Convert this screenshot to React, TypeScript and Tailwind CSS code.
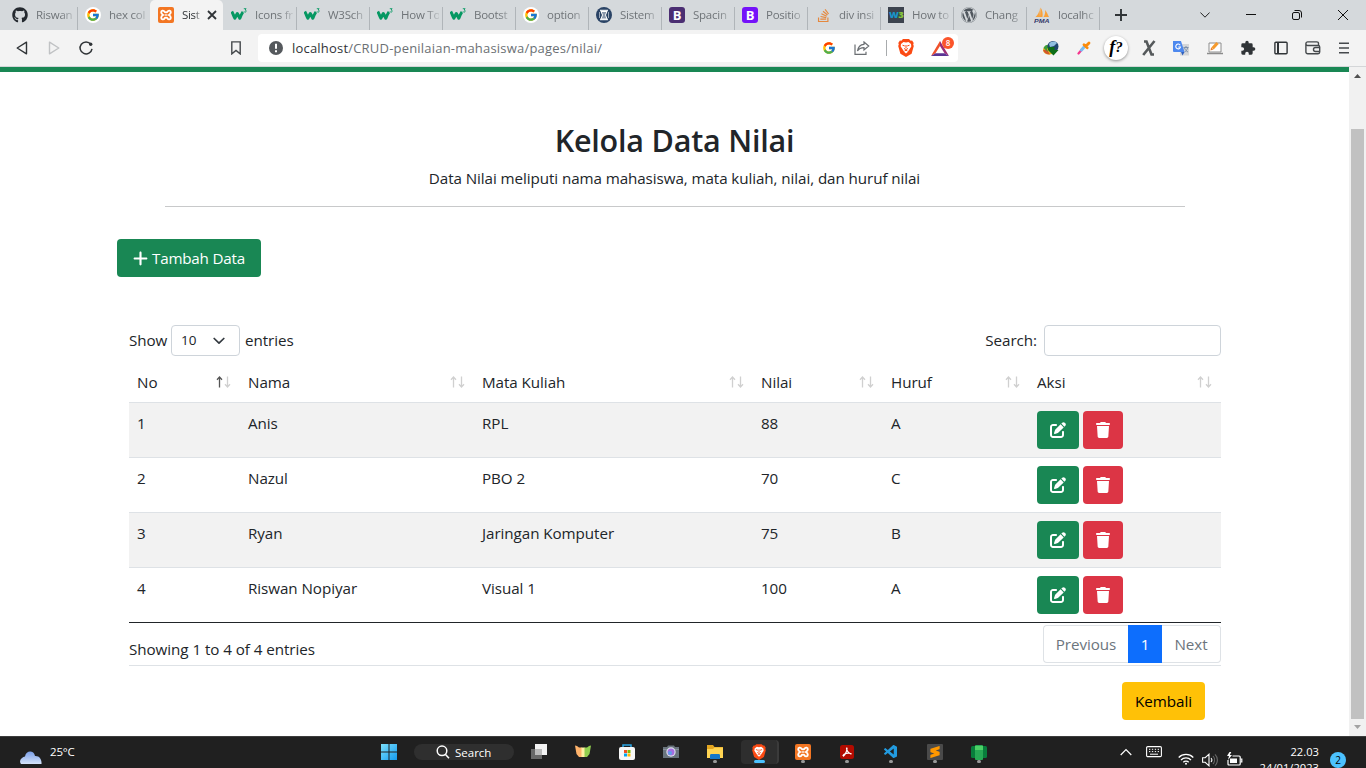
import React from "react";
import { FaGithub, FaWordpress, FaStackOverflow } from "react-icons/fa";
import { FaPenToSquare, FaTrash, FaPlus } from "react-icons/fa6";
import { FcGoogle } from "react-icons/fc";
import { SiSublimetext } from "react-icons/si";
import { VscVscode } from "react-icons/vsc";

const W3Icon = () => (
  <svg width="16" height="16" viewBox="0 0 16 16" fill="none">
    <path d="M0.8 4.5C1.500 5.500 2.500 8.500 3.800 11.200L6.300 6.500L8.800 11.200C10 8.500 11 6 12 5" stroke="#059862" strokeWidth="3" strokeLinejoin="round" />
    <path d="M12.800 1.700h2.300l-1 1.300c1.600.2 1.300 2.400-.2 2.100-.5 0-.9-.3-1-.6" stroke="#059862" strokeWidth="0.9" />
  </svg>
);

const GoogleTabIcon = () => (
  <span className="flex h-4 w-4 items-center justify-center rounded-full bg-white">
    <FcGoogle size={14} />
  </span>
);

const XamppIcon = () => (
  <span className="flex h-4 w-4 items-center justify-center rounded-[2px] bg-[#f37623]">
    <svg width="16" height="16" viewBox="0 0 16 16" fill="none" stroke="#fff" strokeWidth="1.900" strokeLinejoin="round">
      <path d="M5.200 8C3.600 7.200 3.200 6.500 3.200 5.300 3.200 3.300 5.700 3 6.500 4.700c.4.900 2.600.9 3 0 .8-1.700 3.300-1.400 3.300.6 0 1.200-.4 1.900-2 2.700 1.600.8 2 1.500 2 2.700 0 2-2.500 2.300-3.300.6-.4-.9-2.600-.9-3 0-.8 1.700-3.300 1.400-3.300-.6C3.200 9.500 3.600 8.800 5.200 8z" />
      <path d="M6.500 8h3" strokeWidth="1.300" />
    </svg>
  </span>
);

const SistemIcon = () => (
  <svg width="16" height="16" viewBox="0 0 16 16">
    <circle cx="8" cy="8" r="8" fill="#2a4365" />
    <path d="M4 3.500h8M4 12.500h8" stroke="#e5e9ee" strokeWidth="1.400" />
    <path d="M5 4.500h6L9.500 8l1.500 4H5l1.500-4z" fill="#8a98ab" stroke="#fff" strokeWidth="1" />
    <path d="M3.500 5v6M12.500 5v6" stroke="#b8c2ce" strokeWidth=".8" />
  </svg>
);

const BPurple = () => (
  <span className="flex h-4 w-4 items-center justify-center rounded-[3px] bg-[#4b2e72] text-[13px] leading-none font-bold text-white">B</span>
);
const BViolet = () => (
  <span className="flex h-4 w-4 items-center justify-center rounded-[3px] bg-[#7512f9] text-[13px] leading-none font-bold text-white">B</span>
);
const WThree = () => (
  <span className="flex h-4 w-4 items-center justify-center bg-[#3c434e] text-[9.500px] leading-none font-extrabold tracking-[-0.8px] text-[#1795c9]">
    W<span className="text-[#86c43c]">3</span>
  </span>
);
const PmaIcon = () => (
  <svg width="16" height="16" viewBox="0 0 16 16">
    <path d="M5.500 1.500C5.500 5 4 8 1.500 10H6zM6.500 0.500C8.500 3 9 7 8.500 10H6zM11 3c1.800 2 2.800 4.500 4 7H9.500C11 8 11.500 5 11 3z" fill="#f9a13a" />
    <text x="0" y="15.600" fontSize="6.200" fontWeight="800" fontStyle="italic" fill="#353a6b" fontFamily="Liberation Sans, sans-serif" textLength="15.500" lengthAdjust="spacingAndGlyphs">PMA</text>
  </svg>
);

const BraveLion = ({ w = 16, h = 18 }: { w?: number; h?: number }) => (
  <svg width={w} height={h} viewBox="0 0 16 18">
    <path d="M5 0h6l1.700 1.700 1.400-.2L15.700 4l-.500 1.500.600 1.500-2.200 7.700L8 18l-5.600-3.300L.2 7l.6-1.500L.3 4l1.600-2.500 1.400.2z" fill="#fb4a13" />
    <path d="M3 5l2.500-2L8 3.600 10.500 3 13 5l.300 2.500-2 3L9.700 13 8 14.500 6.300 13l-1.600-2.500-2-3z" fill="#fff" />
    <path d="M4.500 6.200l2.300.8M11.500 6.200l-2.300.8M8 6v3M6 9.500l2 1 2-1M6.500 12L8 11.200 9.500 12" stroke="#fb4a13" strokeWidth="1" fill="none" />
  </svg>
);

const tabs: { label: string; icon: React.ReactNode; active?: boolean }[] = [
  { label: "Riswan", icon: <FaGithub size={16} color="#24292f" /> },
  { label: "hex col", icon: <GoogleTabIcon /> },
  { label: "Sist", icon: <XamppIcon />, active: true },
  { label: "Icons fr", icon: <W3Icon /> },
  { label: "W3Sch", icon: <W3Icon /> },
  { label: "How To", icon: <W3Icon /> },
  { label: "Bootst", icon: <W3Icon /> },
  { label: "option", icon: <GoogleTabIcon /> },
  { label: "Sistem", icon: <SistemIcon /> },
  { label: "Spacin", icon: <BPurple /> },
  { label: "Positio", icon: <BViolet /> },
  { label: "div insi", icon: <FaStackOverflow size={15} color="#e5883e" /> },
  { label: "How to", icon: <WThree /> },
  { label: "Chang", icon: <FaWordpress size={16} color="#50575e" /> },
  { label: "localhc", icon: <PmaIcon /> },
];

function TabStrip() {
  return (
    <div className="flex h-[30px] bg-[#d5d9dc] pl-1">
      {tabs.map((t, i) => (
        <div
          key={i}
          className={
            t.active
              ? "flex h-[30px] w-[73px] shrink-0 items-center rounded-t-[5px] bg-[#f3f3f3] pl-[8px]"
              : "flex h-[30px] w-[73px] shrink-0 items-center pl-[8px]"
          }
        >
          <span className="flex w-4 shrink-0 justify-center">{t.icon}</span>
          <span
            className={
              t.active
                ? "ml-2 w-[19px] text-[11.500px] tracking-[-0.3px] whitespace-nowrap text-[#303437] [mask-image:linear-gradient(90deg,#000_65%,#0003)]"
                : "ml-2 w-[38px] text-[11.500px] tracking-[-0.25px] whitespace-nowrap text-[#6f7478] [mask-image:linear-gradient(90deg,#000_65%,#0003)]"
            }
          >
            {t.label}
          </span>
          {t.active ? (
            <svg className="ml-[6px]" width="10" height="10" viewBox="0 0 10 10">
              <path d="M1 1l8 8M9 1l-8 8" stroke="#303437" strokeWidth="1.800" />
            </svg>
          ) : (
            <span className={i === 1 ? "hidden" : "mt-[7px] -mr-px ml-auto h-[23px] w-px shrink-0 bg-[#b0b5b9]"} />
          )}
        </div>
      ))}
      <svg className="mt-[9px] ml-[16px]" width="12" height="12" viewBox="0 0 12 12">
        <path d="M6 0v12M0 6h12" stroke="#303437" strokeWidth="1.900" />
      </svg>
      <div className="mr-[18px] ml-auto flex items-center gap-[36px]">
        <svg width="10" height="6" viewBox="0 0 10 6" fill="none" stroke="#222"><path d="M.4.5L5 5.200 9.600.5" /></svg>
        <svg width="10" height="10" viewBox="0 0 10 10" stroke="#111"><path d="M0 4.500h10" /></svg>
        <svg width="10" height="10" viewBox="0 0 10 10" fill="none" stroke="#111">
          <rect x=".5" y="2.500" width="7" height="7" rx="1.500" />
          <path d="M2.500.5H7A2.500 2.500 0 0 1 9.500 3v4.500" />
        </svg>
        <svg width="10" height="10" viewBox="0 0 10 10" stroke="#111"><path d="M0 0l10 10M10 0L0 10" /></svg>
      </div>
    </div>
  );
}

function Toolbar() {
  return (
    <div className="flex h-[37px] items-center border-b border-[#d4d6d8] bg-[#f3f3f3]">
      <svg className="ml-[16px]" width="12" height="14" viewBox="0 0 12 14" fill="none" stroke="#303437" strokeWidth="1.400" strokeLinejoin="round">
        <path d="M10.500 1.200v11.600L1.200 7z" />
      </svg>
      <svg className="ml-[20px]" width="12" height="14" viewBox="0 0 12 14" fill="none" stroke="#c0c2c4" strokeWidth="1.400" strokeLinejoin="round">
        <path d="M1.500 1.200v11.600L10.800 7z" />
      </svg>
      <svg className="ml-[18px]" width="16" height="16" viewBox="0 0 16 16" fill="none" stroke="#303437" strokeWidth="1.500">
        <path d="M12.800 4.200A6 6 0 1 0 14 8.800" />
        <circle cx="12.700" cy="4.200" r="1.700" fill="#303437" stroke="none" />
      </svg>
      <svg className="ml-[137px]" width="10" height="14" viewBox="0 0 10 14" fill="none" stroke="#45494c" strokeWidth="1.400">
        <path d="M.8.9h8.400v12L5 9.500.8 12.900z" />
      </svg>
      <div className="ml-[17px] flex h-7 w-[700px] items-center rounded bg-white pl-[11px]">
        <svg width="14" height="14" viewBox="0 0 14 14">
          <circle cx="7" cy="7" r="7" fill="#55595d" />
          <path d="M7 2.800v5M7 9.200v2" stroke="#fff" strokeWidth="2" />
        </svg>
        <span className="ml-[9px] w-[530px] pt-px text-[13px] tracking-[0.2px] text-[#6b7074]">
          <span className="text-[#303437]">localhost</span>/CRUD-penilaian-mahasiswa/pages/nilai/
        </span>
        <FcGoogle size={14} />
        <svg className="ml-[18px]" width="16" height="14" viewBox="0 0 16 14" fill="none" stroke="#6a6e72" strokeWidth="1.200">
          <path d="M1 3.500v9.800h11v-2.500" />
          <path d="M10 1l4.700 4L10 9V6.700C7 6.700 5 7.500 3.500 10 4 6.500 6 3.600 10 3.300z" />
        </svg>
        <span className="ml-[16px] h-4 w-px bg-[#a8abad]" />
        <span className="ml-[11px]"><BraveLion /></span>
        <span className="relative ml-[17px]">
          <svg width="18" height="15" viewBox="0 0 18 15">
            <path d="M9 0L0 15l4.500-2.700L9 5z" fill="#f0512c" />
            <path d="M9 0l9 15-4.500-2.700L9 5z" fill="#9b2d76" />
            <path d="M0 15h18l-4.500-2.800h-9z" fill="#5b3494" />
          </svg>
          <span className="absolute -top-[4px] left-[11px] flex h-[12px] w-[12px] items-center justify-center rounded-full bg-[#fb542b] text-[8px] leading-none font-semibold text-white">8</span>
        </span>
      </div>
      <div className="mr-[17px] ml-auto flex w-[306px] items-center justify-between">
        <svg width="16" height="16" viewBox="0 0 16 16">
          <ellipse cx="6" cy="10" rx="6" ry="4.500" fill="#e5b51e" />
          <path d="M0 10c1 3 4 4.500 7 4.500l-3-5z" fill="#d4552c" />
          <path d="M.5 8c1-3 4-4 7-3L4 9l1 3z" fill="#3c9d35" />
          <circle cx="10" cy="6.500" r="5.500" fill="#20466f" />
          <path d="M6 4c2-3 6-3 8-1l-3 3-4 1z" fill="#8fbfe0" />
          <path d="M5.500 7h6v3h4L10.500 15.500 5 10z" fill="#0d6d17" />
        </svg>
        <svg width="14" height="14" viewBox="0 0 14 14" strokeLinecap="round">
          <path d="M1.500 12.500l3-3.500" stroke="#f5358d" strokeWidth="2.200" />
          <path d="M4.500 9l3.500-4" stroke="#79bdf2" strokeWidth="3" />
          <path d="M7 3.700l3.200 3M9.300 4.800L12 2" stroke="#fb8b0b" strokeWidth="2.800" />
        </svg>
        <span className="-mx-1 flex h-6 w-6 items-center justify-center rounded-full bg-white pb-0.5 font-['Liberation_Serif',serif] text-[18px] leading-none font-bold text-black italic shadow-[0_1px_3px_#0006]">
          f<span className="text-[15px]">?</span>
        </span>
        <svg width="14" height="16" viewBox="0 0 14 16" fill="none" stroke="#55595b">
          <path d="M2 1.500h2.500l5 13H12M12.500 1L1.200 15" strokeWidth="2.600" />
        </svg>
        <svg width="16" height="16" viewBox="0 0 16 16">
          <rect x="7" y="4" width="9" height="11.500" fill="#d5d6d8" />
          <path d="M0 1h8l3.500 11H1a1 1 0 0 1-1-1z" fill="#4d88ee" />
          <path d="M8 12h3.500L9.500 15.500z" fill="#2f60bd" />
          <path d="M7.200 5.200A2.400 2.400 0 1 0 7.500 7H5.300" fill="none" stroke="#fff" strokeWidth="1.100" />
          <path d="M10.500 7.500h5M13 6v1.500M14.700 7.500c-.5 2.500-2 4-3 4.500M11.500 8c.7 2 2 3.200 3.500 4" fill="none" stroke="#758ba8" strokeWidth=".9" />
        </svg>
        <svg width="16" height="16" viewBox="0 0 16 16">
          <path d="M2 3h12v9H2z" fill="#fff" stroke="#8c8c8c" />
          <path d="M0 13.500h16" stroke="#8b8b8b" strokeWidth="1.500" />
          <path d="M5.500 8.500L10.500 3" stroke="#f59a2d" strokeWidth="3.200" />
          <path d="M3.500 10.500l.5-3 2.300 2z" fill="#e57d28" />
        </svg>
        <svg width="16" height="16" viewBox="0 0 24 24" fill="#303437">
          <path d="M20.500 11H19V7a2 2 0 0 0-2-2h-4V3.500a2.500 2.500 0 0 0-5 0V5H4a2 2 0 0 0-2 2v3.800h1.500a2.700 2.700 0 0 1 0 5.400H2V20a2 2 0 0 0 2 2h3.800v-1.500a2.700 2.700 0 0 1 5.400 0V22H17a2 2 0 0 0 2-2v-4h1.500a2.500 2.500 0 0 0 0-5z" />
        </svg>
        <svg width="14" height="14" viewBox="0 0 14 14" fill="none" stroke="#303437" strokeWidth="1.400">
          <rect x=".9" y="1.200" width="12.200" height="11.600" rx="1" /><path d="M4 1v12" strokeWidth="2" />
        </svg>
        <svg width="16" height="14" viewBox="0 0 16 14" fill="none" stroke="#45494c" strokeWidth="1.400">
          <path d="M13.500 4V2.500c0-1-.7-1.600-1.600-1.600H2.700a1.800 1.800 0 0 0 0 3.600h10.500c1 0 1.500.6 1.500 1.500v5c0 1-.6 1.700-1.600 1.700H2.700c-1 0-1.800-.7-1.800-1.700V2.700" />
          <path d="M15 6.500h-4.500a2 2 0 0 0 0 4H15" />
        </svg>
        <svg width="10" height="12" viewBox="0 0 10 12" stroke="#45494c" strokeWidth="1.400"><path d="M0 1.200h10M0 6h10M0 10.800h10" /></svg>
      </div>
    </div>
  );
}

const rows = [
  ["1", "Anis", "RPL", "88", "A"],
  ["2", "Nazul", "PBO 2", "70", "C"],
  ["3", "Ryan", "Jaringan Komputer", "75", "B"],
  ["4", "Riswan Nopiyar", "Visual 1", "100", "A"],
];

const cols = "grid grid-cols-[111px_234px_279px_130px_146px_192px]";

function SortArrows({ sorted }: { sorted?: boolean }) {
  return (
    <svg width="15" height="12" viewBox="0 0 15 12" fill="none">
      <path d="M3.500 11.500V1M1 3.700L3.500 1 6 3.700" stroke={sorted ? "#555" : "#d0d0d0"} strokeWidth="1.300" />
      <path d="M11.500.5V11M9 8.300l2.500 2.700L14 8.300" stroke="#d0d0d0" strokeWidth="1.300" />
    </svg>
  );
}

function DataTable() {
  return (
    <div className="w-[1092px]">
      <div className="flex h-[31px] items-center">
        <span className="w-[38px] whitespace-nowrap">Show</span>
        <span className="ml-[4px] flex h-[31px] w-[69px] items-center justify-between rounded border border-[#ced4da] pr-[14px] pl-[9px] text-[13.500px]">
          10
          <svg width="12" height="8" viewBox="0 0 12 8" fill="none"><path d="M1.200 1.500L6 6.200l4.800-4.700" stroke="#343a40" strokeWidth="1.700" strokeLinecap="round" strokeLinejoin="round" /></svg>
        </span>
        <span className="ml-[5px]">entries</span>
        <span className="mr-[7px] ml-auto">Search:</span>
        <span className="h-[31px] w-[177px] rounded border border-[#ced4da]" />
      </div>
      <div className={`${cols} mt-[6px] h-[41px] border-b border-[#dee2e6]`}>
        {["No", "Nama", "Mata Kuliah", "Nilai", "Huruf", "Aksi"].map((h, i) => (
          <div key={h} className="flex items-center justify-between pr-[9px] pl-[8px]">
            {h}
            <SortArrows sorted={i === 0} />
          </div>
        ))}
      </div>
      {rows.map((r, i) => (
        <div
          key={i}
          className={`${cols} h-[55px] border-b ${i === 3 ? "border-[#212529]" : "border-[#dee2e6]"} ${i % 2 === 0 ? "bg-[#f2f2f2]" : "bg-white"}`}
        >
          {r.map((c, j) => (
            <div key={j} className="px-[8px] pt-[8px] leading-6">{c}</div>
          ))}
          <div className="flex gap-[4px] pt-[8px] pl-[8px]">
            <span className="flex h-[38px] w-[42px] items-center justify-center rounded bg-[#198754] text-white"><FaPenToSquare size={16} /></span>
            <span className="flex h-[38px] w-[40px] items-center justify-center rounded bg-[#dc3545] text-white"><FaTrash size={16} /></span>
          </div>
        </div>
      ))}
      <div className="flex h-[43px] border-b border-[#dee2e6]">
        <span className="mt-[14px] leading-6">Showing 1 to 4 of 4 entries</span>
        <div className="mt-[2px] ml-auto flex h-[38px] text-[#6c757d]">
          <span className="flex w-[85px] items-center justify-center rounded-l border border-r-0 border-[#dee2e6]">Previous</span>
          <span className="flex w-[34px] items-center justify-center bg-[#0d6efd] text-white">1</span>
          <span className="flex w-[59px] items-center justify-center rounded-r border border-l-0 border-[#dee2e6]">Next</span>
        </div>
      </div>
    </div>
  );
}

function PageBody() {
  return (
    <div className="flex h-[669px]">
      <div className="flex w-[1349px] flex-col border-t-[5px] border-[#198754] bg-white text-[15.200px] tracking-[-0.06px] text-[#212529]">
        <h1 className="mt-[49px] text-center text-[30.500px] leading-[38px] font-semibold tracking-[-0.2px]">Kelola Data Nilai</h1>
        <p className="mt-[7px] text-center leading-6 tracking-[-0.08px]">Data Nilai meliputi nama mahasiswa, mata kuliah, nilai, dan huruf nilai</p>
        <div className="mt-[16px] ml-[165px] h-px w-[1020px] bg-[#c8c9ca]" />
        <span className="mt-[32px] ml-[117px] flex h-[38px] w-[144px] items-center rounded bg-[#198754] pl-[15px] text-white">
          <FaPlus size={17} />
          <span className="ml-[3px] tracking-[-0.2px]">Tambah Data</span>
        </span>
        <div className="mt-[48px] ml-[129px]"><DataTable /></div>
        <span className="mt-[16px] ml-[1122px] flex h-[38px] w-[83px] items-center justify-center rounded bg-[#ffc107] text-black">Kembali</span>
      </div>
      <div className="flex w-[17px] flex-col items-center bg-[#f1f1f1]">
        <svg className="mt-[7px]" width="7" height="4" viewBox="0 0 7 4"><path d="M0 4L3.500 0 7 4z" fill="#505050" /></svg>
        <div className="mt-[51px] h-[590px] w-[13px] bg-[#c1c1c1]" />
        <svg className="mt-[6px]" width="7" height="4" viewBox="0 0 7 4"><path d="M0 0L3.500 4 7 0z" fill="#a3a3a3" /></svg>
      </div>
    </div>
  );
}

const taskApps: { icon: React.ReactNode; running?: boolean; active?: boolean }[] = [
  {
    icon: (
      <svg width="16" height="16" viewBox="0 0 16 16"><path d="M0 5h11v10H0z" fill="#686868" /><path d="M4 0h12v11H4z" fill="#f3f3f3" /><path d="M4 5h7v6H4z" fill="#bababa" /></svg>
    ),
  },
  {
    icon: (
      <svg width="16" height="16" viewBox="0 0 16 16"><path d="M0 1.500l2 .5 2 1.500h3V13H4L1.500 10z" fill="#ffb36b" /><path d="M16 1.500l-2 .5-2 1.500H9V13h3l2.500-3z" fill="#91cf4f" /><path d="M6.500 3.500h3V13h-3z" fill="#fff0a3" /></svg>
    ),
  },
  {
    icon: (
      <svg width="16" height="16" viewBox="0 0 16 16"><path d="M4 4V1h8v3" fill="none" stroke="#2aa5e4" strokeWidth="1.500" /><rect y="3" width="16" height="13" rx="2" fill="#f7f7f7" /><path d="M5 6h3v3H5z" fill="#f25022" /><path d="M8.500 6h3v3h-3z" fill="#7fba00" /><path d="M5 9.500h3v3H5z" fill="#00a4ef" /><path d="M8.500 9.500h3v3h-3z" fill="#ffb900" /></svg>
    ),
  },
  {
    icon: (
      <svg width="16" height="16" viewBox="0 0 16 16"><path d="M0 3h4l1-1.500h6L12 3h4v11H0z" fill="#69747d" /><path d="M0 5h16v1H0z" fill="#87929a" /><circle cx="8" cy="8" r="4.700" fill="#dce1ec" /><circle cx="8" cy="8" r="3.500" fill="#a56de0" /><circle cx="7" cy="9" r="2" fill="#609ce9" /></svg>
    ),
  },
  {
    running: true,
    icon: (
      <svg width="16" height="16" viewBox="0 0 16 16"><path d="M0 1h6l1.500 2H16v11H0z" fill="#e2a520" /><path d="M0 5h6l1.500-1.500H16V14H0z" fill="#ffd452" /><path d="M3 11.500c0-1 .5-1.500 1.500-1.500h7c1 0 1.500.5 1.500 1.500V15H3z" fill="#1577c8" /></svg>
    ),
  },
  { active: true, icon: <BraveLion w={14} h={16} /> },
  { running: true, icon: <XamppIcon /> },
  {
    running: true,
    icon: (
      <svg width="16" height="16" viewBox="0 0 16 16"><rect x="1" y="1" width="14" height="14" rx="2.500" fill="#b30b00" /><path d="M4 11.500c1-2 4.500-3 8-2M7.500 4c.2 3 2 5 4.500 6M8 4c0 3-1.500 6-3.500 8" fill="none" stroke="#fff" strokeWidth="1.200" strokeLinecap="round" /></svg>
    ),
  },
  { running: true, icon: <VscVscode size={16} color="#229be0" /> },
  {
    running: true,
    icon: (
      <span className="flex h-4 w-4 items-center justify-center rounded-[1px] bg-[#4a4a4a]"><SiSublimetext size={12} color="#ff9800" /></span>
    ),
  },
  {
    running: true,
    icon: (
      <svg width="16" height="16" viewBox="0 0 16 16"><rect y="2" width="16" height="12" rx="1.500" fill="#087e3c" /><rect x="4" y="1" width="8" height="15" rx="1" fill="#27a955" /><path d="M4 2h8v4H4z" fill="#4dd266" /></svg>
    ),
  },
];

function Taskbar() {
  return (
    <div className="flex h-8 overflow-hidden border-t border-[#3c3c3c] bg-[#202020] text-[11px] text-white">
      <div className="flex w-[381px] pl-[18px]">
        <svg className="mt-[14px]" width="24" height="13" viewBox="0 0 24 13">
          <defs><linearGradient id="cloud" x1="0" y1="0" x2="0" y2="1"><stop stopColor="#7ba0e8" /><stop offset="1" stopColor="#d6e3fa" /></linearGradient></defs>
          <path d="M3 13a4 4 0 0 1 1-6 5 5 0 0 1 3-1.500C8-1 16-1 17 5c4-.5 7 3 6.500 8z" fill="url(#cloud)" />
        </svg>
        <span className="mt-[7px] ml-[8px] text-[11.500px] leading-4 tracking-[-0.2px]">25°C</span>
      </div>
      <svg className="mt-[7px] w-[16px]" width="16" height="16" viewBox="0 0 16 16">
        <defs><linearGradient id="win" x1="0" y1="0" x2="1" y2="1"><stop stopColor="#7ce0fb" /><stop offset="1" stopColor="#149bf0" /></linearGradient></defs>
        <path d="M0 0h7.500v7.500H0zM8.500 0H16v7.500H8.500zM0 8.500h7.500V16H0zM8.500 8.500H16V16H8.500z" fill="url(#win)" />
      </svg>
      <div className="mt-[7px] ml-[17px] flex h-4 w-[100px] items-center rounded-full bg-[#2f2f2f] pl-[22px]">
        <svg width="14" height="14" viewBox="0 0 14 14" fill="none" stroke="#fff" strokeWidth="1.500"><circle cx="6" cy="5.800" r="4.800" /><path d="M9.500 9.500L13 13.300" /></svg>
        <span className="ml-[5px] pt-px text-[11.500px]">Search</span>
      </div>
      <div className="ml-[3px] flex">
        {taskApps.map((a, i) => (
          <div key={i} className="flex w-11 justify-center">
            <div
              className={
                a.active
                  ? "mt-[3px] ml-[2px] flex h-[24px] w-[38px] shrink-0 flex-col items-center rounded border-r-2 border-[#3b3b3b] bg-[#2e2e2e] pt-[4px]"
                  : "mt-[7px] flex flex-col items-center"
              }
            >
              <span className="flex h-4 w-4 justify-center">{a.icon}</span>
              {a.running && <span className="h-[3px] w-[4px] rounded-full bg-[#9a9a9a]" />}
              {a.active && <span className="h-[3px] w-[11px] shrink-0 rounded-full bg-[#4cc2ff]" />}
            </div>
          </div>
        ))}
      </div>
      <div className="mr-[20px] ml-auto flex">
        <svg className="mt-[11px]" width="12" height="8" viewBox="0 0 12 8" fill="none" stroke="#fff" strokeWidth="1.200"><path d="M.7 7L6 1.500 11.300 7" /></svg>
        <svg className="mt-[9px] ml-[14px]" width="16" height="12" viewBox="0 0 16 12" fill="none" stroke="#fff">
          <rect x=".6" y=".6" width="14.800" height="10" rx="1.200" strokeWidth="1.100" />
          <path d="M3 3.300h10.500M3 5.600h10.500" strokeDasharray="1.300 1.600" /><path d="M4 8.200h8" />
        </svg>
        <svg className="mt-[16px] ml-[16px]" width="16" height="12" viewBox="0 0 16 12" fill="none" stroke="#fff" strokeWidth="1.300">
          <path d="M.7 4.500a10.300 10.300 0 0 1 14.600 0M3 7a7 7 0 0 1 10 0M5.300 9.300a3.800 3.800 0 0 1 5.400 0" /><circle cx="8" cy="10.800" r="1" fill="#fff" stroke="none" />
        </svg>
        <svg className="mt-[16px] ml-[8px]" width="16" height="14" viewBox="0 0 16 14" fill="none" stroke="#fff" strokeWidth="1.100">
          <path d="M.6 4.700h2.600L7 1.200v11.600L3.200 9.300H.6zM9 5a3 3 0 0 1 0 4" /><path d="M11 3a6 6 0 0 1 0 8M13 1.300a8 8 0 0 1 0 11.400" stroke="#686868" />
        </svg>
        <svg className="mt-[15px] ml-[8px]" width="17" height="15" viewBox="0 0 17 15" fill="none" stroke="#fff" strokeWidth="1.200">
          <path d="M6.500 4h6.700c.7 0 1 .3 1 1v7c0 .7-.3 1-1 1H3c-.7 0-1-.3-1-1V8" /><path d="M14.500 7h1.300v3h-1.300" /><path d="M4 6.500h3l4 0v4.500H4z" fill="#fff" stroke="none" /><path d="M3.500 0L1 4h2L2 8l4-5H3.800L5.300 0z" fill="#fff" stroke="none" />
        </svg>
        <div className="mt-[7px] ml-[11px] w-[65px] text-right text-[11.200px] leading-4">22.03<br />24/01/2023</div>
        <span className="mt-[15px] ml-[11px] flex h-4 w-4 items-center justify-center rounded-full bg-[#4cc2ff] text-[10px] text-black">2</span>
      </div>
    </div>
  );
}

export default function App() {
  return (
    <div className="h-[768px] w-[1366px] overflow-hidden bg-white font-['Open_Sans','Noto_Sans',sans-serif]">
      <TabStrip />
      <Toolbar />
      <PageBody />
      <Taskbar />
    </div>
  );
}
